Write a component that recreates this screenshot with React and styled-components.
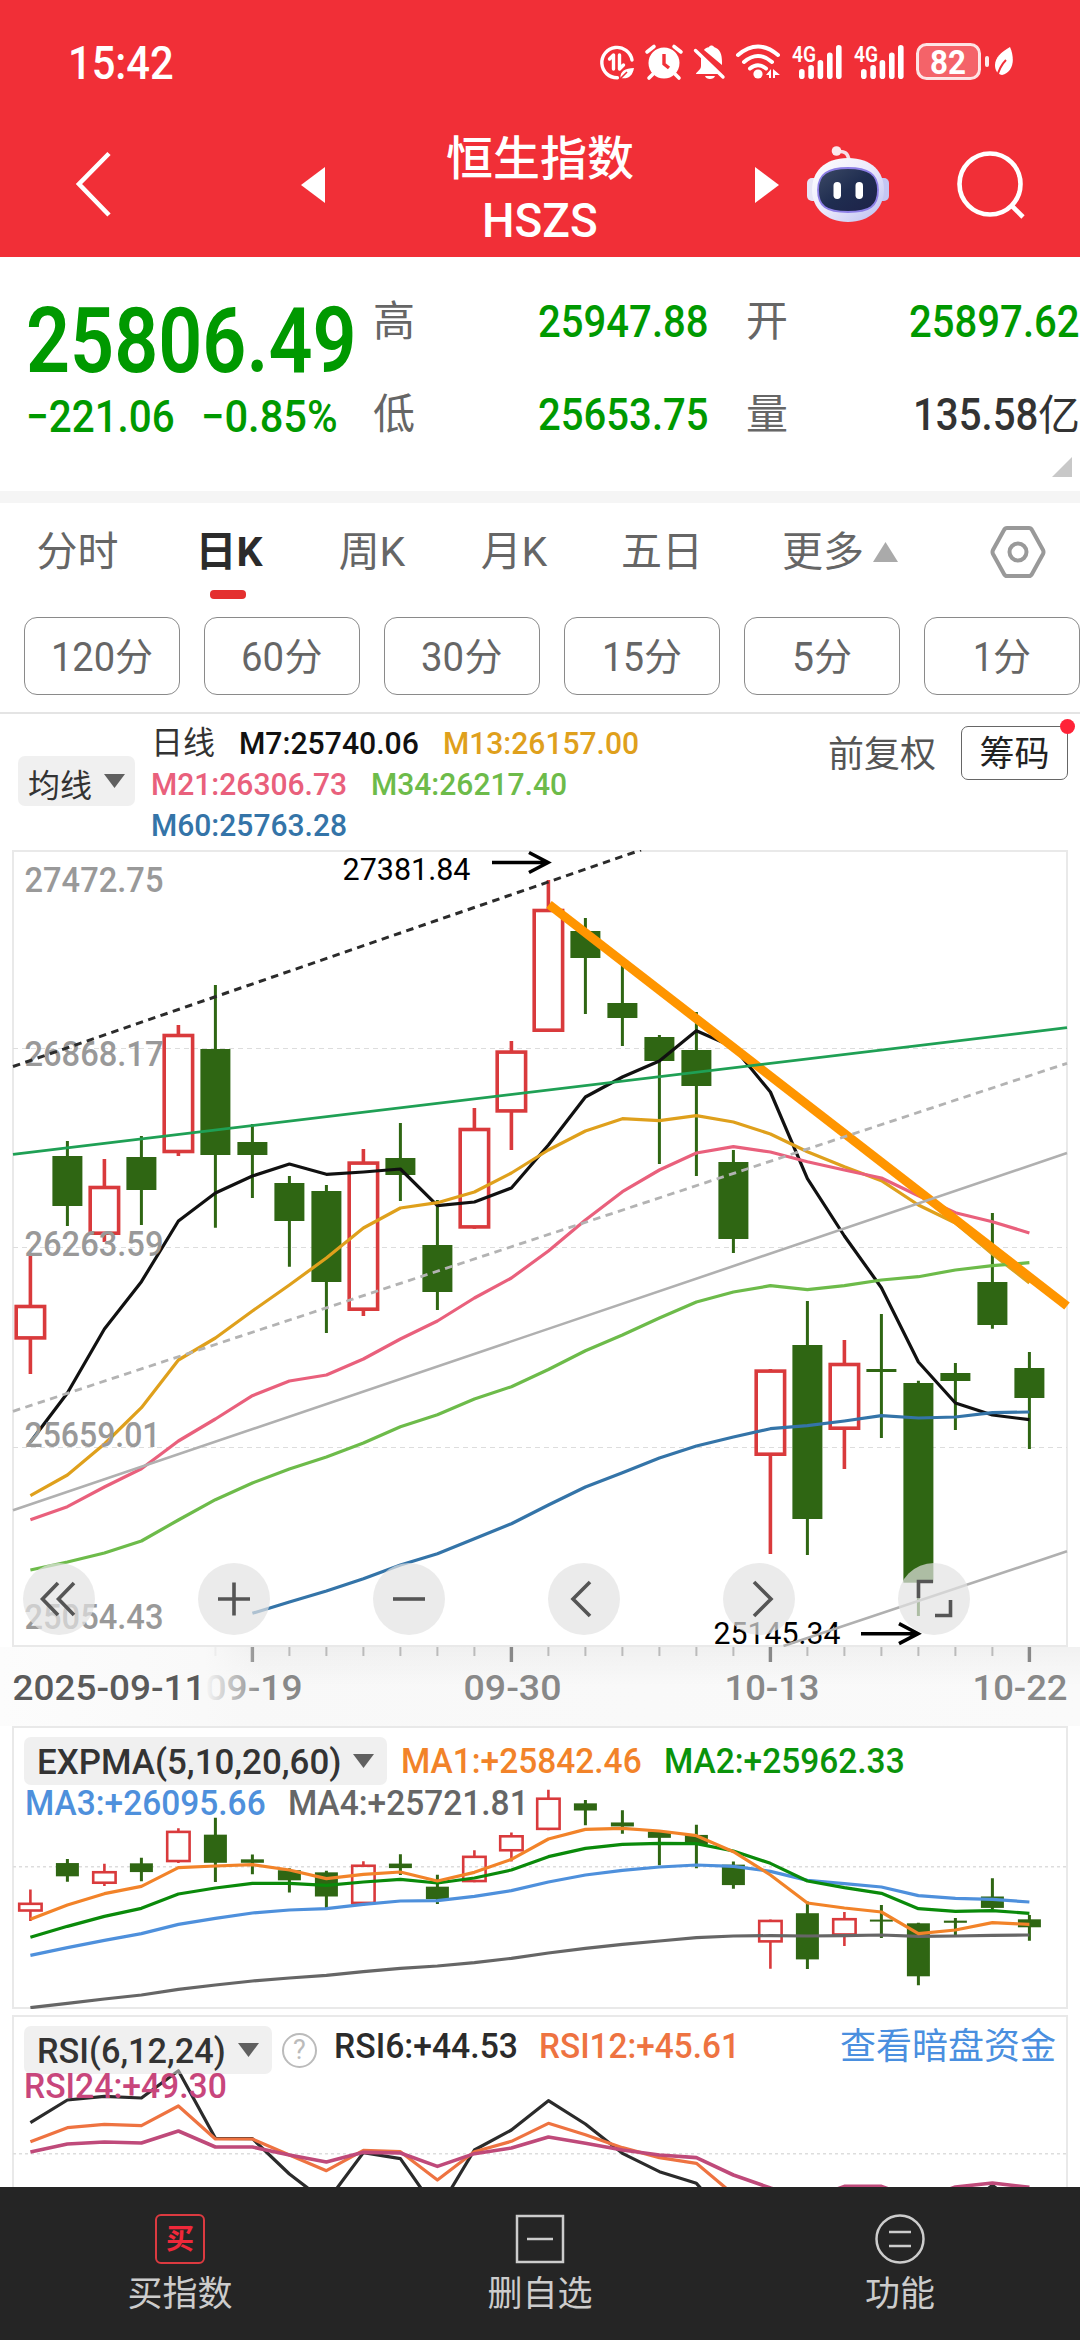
import React, { useLayoutEffect, useRef, useState } from 'react';
import styled, { createGlobalStyle } from 'styled-components';

const GlobalStyle = createGlobalStyle`
  * { box-sizing: border-box; }
  body {
    margin: 0;
    background: #fff;
    font-family: Roboto, 'Noto Sans CJK SC', sans-serif;
  }
  svg { display: block; }
`;

const RED = '#f12f37';
const UP = '#d93a3c';
const DOWN = '#2f6613';

const Screen = styled.div`
  width: 1080px;
  height: 2340px;
  overflow: hidden;
  display: flex;
  flex-direction: column;
  background: #fff;
`;

/* ---------- text squeezed to a given width, like a DIN face ---------- */

const FitBox = styled.span`
  display: inline-block;
  flex: none;
  width: ${p => p.$width}px;
  white-space: nowrap;
`;

const FitInner = styled.span`
  display: inline-block;
  transform-origin: 0 50%;
`;

const Fit = ({ width, children }) => {
  const ref = useRef(null);
  const [scale, setScale] = useState(1);
  useLayoutEffect(() => {
    if (ref.current.offsetWidth) setScale(width / ref.current.offsetWidth);
  }, [width]);
  return (
    <FitBox $width={width}>
      <FitInner ref={ref} style={{ transform: `scaleX(${scale})` }}>{children}</FitInner>
    </FitBox>
  );
};

/* ---------- status bar ---------- */

const StatusBar = styled.div`
  flex: none;
  height: 124px;
  display: flex;
  align-items: center;
  justify-content: space-between;
  padding: 0 66px 0 68px;
  background: ${RED};
  color: #fff;
`;

const Clock = styled.div`
  padding-top: 1px;
  font-size: 46px;
  font-weight: 500;
  line-height: 60px;
`;

const StatusIcons = () => (
  <svg width="416" height="40" viewBox="598 41 416 40" fill="#fff">
    <g fill="none" stroke="#fff" strokeWidth="3.4" strokeLinecap="round">
      <path d="M632 59a15.2 15.2 0 1 0-14.6 17.8" />
      <path d="M609.500 58l4-4V68M619.500 54V68l4-4" strokeLinejoin="round" />
    </g>
    <path d="M634 67c-9 .5-14 3-13.500 10 7 1.500 12-1.500 13.500-10z" />
    <path d="M620 78l7-7" stroke={RED} strokeWidth="1.600" />
    <circle cx="664" cy="62" r="15.500" />
    <path d="M647 51l7-5.500M681 51l-7-5.500M653 73l-4 4M675 73l4 4" stroke="#fff" strokeWidth="3.600" strokeLinecap="round" />
    <path d="M664 53v10l5 4" fill="none" stroke={RED} strokeWidth="3.400" />
    <path d="M701 54l20 19h-25c0-2 5-4 5-8zM704 49c2-3 4-2 5-3 1-2 4-2 5 0 6 2 8 7 8 15v3zM705 75h10c-1 4-9 4-10 0z" />
    <path d="M695.500 49.500L723 76" stroke="#fff" strokeWidth="3.400" strokeLinecap="round" />
    <g fill="none" stroke="#fff" strokeWidth="4" strokeLinecap="round">
      <path d="M738 54q20-17 40 0M744 61q14-12 28 0M750 67.500q8-6.500 16 0" />
    </g>
    <circle cx="758" cy="73" r="4.600" />
    <path d="M766 74l5-6v9h-2v-3zM773 68l7 6h-5v3h-2z" />
    {[799, 861].map(x => (
      <g key={x}>
        <text x={x - 7} y="61" fontSize="22" fontWeight="600" textLength="24" lengthAdjust="spacingAndGlyphs">4G</text>
        {[[0, 68], [9.3, 64], [18.6, 59], [28, 51.5], [37, 44]].map(([dx, top]) => (
          <rect key={dx} x={x + dx} y={top} width="5.600" height={78 - top} rx="2.800" />
        ))}
      </g>
    ))}
    <rect x="917.500" y="43.500" width="62" height="34" rx="9" fill="#fff" fillOpacity=".25" stroke="#fff" strokeWidth="3" strokeOpacity=".85" />
    <text x="930" y="72.500" fontSize="33" fontWeight="700" textLength="36" lengthAdjust="spacingAndGlyphs">82</text>
    <rect x="985" y="55" width="4" height="11" rx="2" fillOpacity=".9" />
    <path d="M1010 46c-9 5-15 11-15 18 0 5 2 9 7 10 10-2 14-14 8-28z" />
    <path d="M997 76c2-8 5-13 9-17" fill="none" stroke={RED} strokeWidth="2" />
  </svg>
);

/* ---------- title bar ---------- */

const TitleBar = styled.div`
  flex: none;
  height: 133px;
  display: flex;
  align-items: center;
  padding: 0 0 12px 74px;
  background: ${RED};
`;

const Title = styled.div`
  width: 430px;
  margin-top: 11px;
  text-align: center;
  color: #fff;
  font-size: 47px;
  font-weight: 500;
  line-height: 62px;
`;

const Ticker = styled.div`
  font-size: 49px;
`;

const Slot = styled.div`
  flex: none;
  margin-left: ${p => p.$left}px;
`;

const Robot = () => (
  <svg width="82" height="78" viewBox="0 0 82 78">
    <defs>
      <linearGradient id="shell" x1="0" y1="0" x2="1" y2="1">
        <stop offset="0" stopColor="#fff" />
        <stop offset=".5" stopColor="#ebe9fb" />
        <stop offset="1" stopColor="#b9bdf0" />
      </linearGradient>
      <linearGradient id="visor" x1="0" y1="0" x2="1" y2="1">
        <stop offset="0" stopColor="#3d4a66" />
        <stop offset=".5" stopColor="#1f2d50" />
        <stop offset="1" stopColor="#1d2148" />
      </linearGradient>
    </defs>
    <path d="M29 6q12-3 13 9" fill="none" stroke="#f6dfe8" strokeWidth="3.500" />
    <circle cx="29.500" cy="5" r="4.800" fill="#fbe9ee" />
    <rect x="0" y="32" width="12" height="23" rx="5" fill="#e6e4f6" />
    <rect x="70" y="32" width="12" height="23" rx="5" fill="#c4c6f3" />
    <path d="M41 12c24 0 36 14 36 32S63 76 41 76 5 62 5 44s12-32 36-32z" fill="url(#shell)" />
    <path d="M41 22c20 0 30 6 30 22s-8 22-30 22-30-6-30-22 10-22 30-22z" fill="url(#visor)" stroke="#8d7fe6" strokeWidth="1.800" />
    <rect x="26.500" y="36" width="7.500" height="17" rx="3.700" fill="#fff" />
    <rect x="48.500" y="36" width="7.500" height="17" rx="3.700" fill="#fff" />
  </svg>
);

/* ---------- quote ---------- */

const Quote = styled.div`
  position: relative;
  flex: none;
  height: 246px;
  display: flex;
  padding-left: 26px;
  border-bottom: 12px solid #f5f5f5;
  color: #090;
`;

const PriceColumn = styled.div`
  width: 347px;
  padding-top: 35px;
`;

const Price = styled.div`
  height: 99px;
  font-size: 90px;
  font-weight: 600;
  line-height: 100px;
`;

const Change = styled.div`
  display: flex;
  gap: 26px;
  font-size: 45px;
  font-weight: 500;
  line-height: 52px;
`;

const Stats = styled.div`
  display: grid;
  grid-template-columns: 336px 37px 334px;
  grid-auto-rows: 93px;
  padding-top: 18px;
  line-height: 93px;
`;

const Stat = styled.div`
  display: flex;
  justify-content: space-between;
  font-size: 45px;
  font-weight: 500;
  color: ${p => p.$color};
  grid-column: ${p => p.$col};
`;

const StatName = styled.span`
  font-size: 42px;
  font-weight: 400;
  color: #666;
`;

const Unit = styled.span`
  font-size: ${p => p.$size || 42}px;
  font-weight: 400;
`;

const Corner = styled.div`
  position: absolute;
  right: 8px;
  bottom: 14px;
  width: 20px;
  height: 20px;
  background: #c8c8c8;
  clip-path: polygon(100% 0, 100% 100%, 0 100%);
`;

/* ---------- period tabs ---------- */

const Tabs = styled.div`
  flex: none;
  height: 96px;
  display: grid;
  grid-template-columns: 155px 148px 138px 146px 150px 206px 150px;
`;

const Tab = styled.div`
  position: relative;
  display: flex;
  align-items: center;
  justify-content: center;
  gap: 9px;
  padding-top: 2px;
  font-size: 41px;
  line-height: 94px;
  font-weight: ${p => (p.$active ? 700 : 400)};
  color: ${p => (p.$active ? '#2b2b2b' : '#666')};

  &::after {
    content: '';
    display: ${p => (p.$active ? 'block' : 'none')};
    position: absolute;
    left: 55px;
    bottom: 0;
    width: 36px;
    height: 9px;
    border-radius: 4px;
    background: #e4302f;
  }
`;

const Triangle = styled.i`
  flex: none;
  width: ${p => p.$size}px;
  height: ${p => p.$height}px;
  background: ${p => p.$color};
  clip-path: ${p => (p.$up ? 'polygon(50% 0, 100% 100%, 0 100%)' : 'polygon(0 0, 100% 0, 50% 100%)')};
`;

const Minutes = styled.div`
  flex: none;
  display: flex;
  gap: 24px;
  height: 115px;
  padding: 18px 0 0 24px;
  border-bottom: 2px solid #e4e4e4;
`;

const Minute = styled.div`
  flex: none;
  display: flex;
  justify-content: center;
  width: 156px;
  height: 78px;
  border: 1px solid #8a8a8a;
  border-radius: 13px;
  font-size: 41px;
  line-height: 78px;
  color: #666;
`;

/* ---------- indicator header ---------- */

const Averages = styled.div`
  flex: none;
  display: flex;
  align-items: flex-start;
  height: 136px;
  padding-left: 18px;
`;

const Picker = styled.div`
  flex: none;
  display: flex;
  align-items: center;
  justify-content: space-between;
  width: ${p => p.$width}px;
  height: ${p => p.$height}px;
  margin-top: ${p => p.$top || 0}px;
  padding: 3px ${p => p.$pad}px 0;
  border-radius: 7px;
  background: rgba(225, 225, 225, 0.5);
  font-size: ${p => p.$font}px;
  font-weight: ${p => p.$weight || 500};
  color: #333;

  ${Triangle} { margin-top: -3px; }
`;

const AverageList = styled.div`
  width: 678px;
  margin-left: 15px;
  padding-top: 9px;
`;

const AverageRow = styled.div`
  display: flex;
  gap: 24px;
  height: 41px;
  padding-left: 1px;
  font-size: 32px;
  font-weight: 500;
  line-height: 41px;
`;

const Ink = styled.span`
  color: ${p => p.$color};
  font-weight: ${p => p.$weight};
`;

const Restore = styled.div`
  width: 133px;
  padding-top: 16px;
  font-size: 36px;
  line-height: 50px;
  color: #555;
`;

const ChipsButton = styled.div`
  position: relative;
  width: 107px;
  height: 54px;
  margin-top: 12px;
  border: 1.500px solid #666;
  border-radius: 7px;
  text-align: center;
  font-size: 35px;
  line-height: 55px;
  color: #222;

  &::after {
    content: '';
    position: absolute;
    right: -8px;
    top: -8px;
    width: 15px;
    height: 15px;
    border-radius: 50%;
    background: #ff2338;
  }
`;

/* ---------- chart data, in screen pixels ---------- */

const X0 = 30.4;
const STEP = 37;
const px = i => X0 + STEP * i;

// [rising, high, body top, body bottom, low]
const CANDLES = [
  [1, 1255.7, 1304.7, 1339.7, 1374],
  [0, 1141, 1156, 1206, 1226],
  [1, 1159, 1185.7, 1235, 1242],
  [0, 1136, 1157, 1190, 1225],
  [1, 1025, 1033.7, 1153.3, 1156],
  [0, 985, 1049, 1155, 1227.7],
  [0, 1124, 1142, 1155, 1198],
  [0, 1176, 1183, 1221, 1266.7],
  [0, 1185, 1191, 1282, 1333],
  [1, 1149, 1161.3, 1311, 1316],
  [0, 1123, 1158, 1175, 1201],
  [0, 1200, 1245, 1292, 1310],
  [1, 1108, 1127.7, 1228.7, 1228.7],
  [1, 1041, 1050.3, 1112.7, 1150],
  [1, 880, 908.7, 1032, 1032],
  [0, 918, 931, 958, 1014],
  [0, 957, 1003, 1018, 1046],
  [0, 1035, 1037, 1061, 1164],
  [0, 1012, 1050, 1086, 1176],
  [0, 1150, 1162, 1239, 1253],
  [1, 1369, 1369.3, 1456, 1554],
  [0, 1301, 1345, 1519, 1555],
  [1, 1340, 1362.7, 1430, 1469],
  [0, 1314, 1369, 1372, 1438],
  [0, 1380.7, 1383, 1582.7, 1616],
  [0, 1363, 1373, 1381, 1430],
  [0, 1213, 1282, 1325, 1328.7],
  [0, 1352, 1368, 1398, 1449],
];

const M7 = [1442, 1393, 1329, 1281.7, 1221, 1193, 1176, 1164, 1174.3, 1172, 1169, 1205.7, 1202, 1188, 1145, 1097, 1077, 1061, 1030.7, 1047, 1092, 1178.7, 1236, 1287.7, 1362, 1403, 1415, 1419.7];
const M13 = [1495.7, 1475, 1444, 1407.7, 1360, 1338, 1311, 1285, 1258, 1228, 1208, 1202.7, 1192, 1173, 1150, 1131, 1118.7, 1120.7, 1115.7, 1122, 1134, 1151.7, 1166.7, 1180.7, 1205, 1223, 1254, 1283];
const M21 = [1519.7, 1506.7, 1487, 1468.7, 1441, 1419, 1395.7, 1381, 1375, 1359, 1339, 1321, 1298, 1278, 1251, 1220, 1191.7, 1170, 1153, 1146.7, 1152, 1161.7, 1170, 1178, 1195.7, 1212.7, 1221.7, 1233];
const M34 = [1570, 1562, 1553, 1541, 1520, 1499.7, 1483, 1469, 1457, 1443, 1426.7, 1414.7, 1399, 1386.7, 1369.5, 1350.7, 1335, 1318, 1302, 1292, 1285.7, 1289.7, 1285.7, 1280, 1276.7, 1270, 1265.7, 1262.7];
const M60 = [1613.3, 1602, 1591, 1578.7, 1565, 1553.7, 1538.7, 1523.7, 1505, 1487, 1472.7, 1458, 1446, 1437, 1428.7, 1425.7, 1421, 1415.7, 1418, 1417, 1412.7, 1412];

// the lower panels are stored at three units per pixel
const E1 = [598, 555, 521, 499, 443, 438, 434, 450, 476, 463, 456, 483, 457, 418, 357, 328, 325, 333, 347, 395, 465, 549, 564, 576, 641, 630, 608, 613];
const E2 = [652, 619, 589, 565, 522, 504, 490, 490, 496, 486, 478, 489, 474, 450, 410, 385, 373, 370, 371, 393, 430, 483, 503, 520, 566, 574, 572, 580];
const E3 = [706, 683, 661, 641, 613, 595, 579, 570, 566, 553, 543, 542, 529, 512, 486, 465, 451, 441, 435, 439, 454, 481, 491, 501, 527, 535, 538, 546];
const E4 = [863, 850, 837, 825, 808, 795, 783, 774, 766, 755, 745, 738, 728, 715, 699, 685, 673, 663, 653, 648, 647, 648, 647, 645, 649, 648, 646, 645];

const R6 = [368, 300, 289, 294, 212, 415, 416, 522, 607, 458, 476, 635, 450, 390, 302, 372, 460, 515, 550, 675, 760, 760, 700, 720, 780, 640, 556, 640];
const R12 = [425, 383, 373, 377, 318, 417, 417, 465, 512, 451, 455, 540, 455, 424, 370, 404, 443, 473, 490, 583, 650, 680, 620, 620, 700, 640, 590, 620];
const R24 = [456, 432, 426, 429, 393, 441, 441, 465, 486, 457, 459, 499, 461, 444, 411, 430, 450, 465, 473, 525, 564, 600, 559, 559, 600, 561, 549, 562];

const Curve = ({ values, color, from = 0, base = 0, unit = 1, width = 3.2 }) => (
  <polyline
    points={values.map((v, i) => `${px(i + from)},${base + v / unit}`).join(' ')}
    fill="none"
    stroke={color}
    strokeWidth={width}
    strokeLinejoin="round"
  />
);

const Candles = ({ scale = y => y, body, line }) => CANDLES.map(([rising, ...ys], i) => {
  const [high, top, bottom, low] = ys.map(scale);
  const x = px(i);
  const color = rising ? UP : DOWN;
  return (
    <g key={i} stroke={color} strokeWidth={rising ? line : 3}>
      <path d={`M${x} ${high}V${top + 1}M${x} ${bottom - 1}V${low}`} />
      {rising ? (
        <rect x={x - (body + 2 - line) / 2} y={top + line / 2} width={body + 2 - line} height={bottom - top - line} fill="none" />
      ) : (
        <rect x={x - body / 2} y={top} width={body} height={Math.max(bottom - top, 2)} fill={color} stroke="none" />
      )}
    </g>
  );
});

const Label = ({ x, y, width, size = 35, color = '#999', weight = 500, children }) => (
  <text x={x - 1.5} y={y} fontSize={size} fontWeight={weight} fill={color} textLength={width + 3} lengthAdjust="spacingAndGlyphs">
    {children}
  </text>
);

const Arrow = ({ x1, x2, y }) => (
  <path d={`M${x1} ${y}H${x2 - 2}M${x2 - 20} ${y - 10}L${x2 - 1} ${y}L${x2 - 20} ${y + 10}`} fill="none" stroke="#000" strokeWidth="3.6" />
);

/* everything in a panel shares one grid cell */
const Panel = styled.div`
  flex: none;
  display: grid;
  height: ${p => p.$height}px;
  margin-bottom: ${p => p.$gap || 0}px;
  overflow: hidden;

  > * { grid-area: 1 / 1; }
`;

const PriceChart = () => (
  <svg width="1080" height="797" viewBox="0 850 1080 797">
    <rect x="13" y="851" width="1054" height="795" fill="none" stroke="#e9e9e9" strokeWidth="2" />
    <path d="M13 1048.500H1067M13 1247.500H1067M13 1447.500H1067" stroke="#ddd" strokeWidth="1" strokeDasharray="5 4" />
    <Candles body={30} line={3.6} />
    <Label x={344} y={880} width={125} size={31} weight={400} color="#000">27381.84</Label>
    <Arrow x1={492} x2={549} y={862.5} />
    <Label x={715} y={1644} width={124} size={31} weight={400} color="#000">25145.34</Label>
    <Arrow x1={861} x2={919} y={1633.7} />
    <Curve values={M7} color="#111" />
    <Curve values={M13} color="#dfa01c" />
    <Curve values={M21} color="#e9607c" />
    <Curve values={M34} color="#6dbb4a" />
    <Curve values={M60} from={6} color="#3474a8" />
    <Label x={26} y={892} width={136}>27472.75</Label>
    <Label x={26} y={1065.7} width={136}>26868.17</Label>
    <Label x={26} y={1256} width={136}>26263.59</Label>
    <Label x={26} y={1446.7} width={133}>25659.01</Label>
    <Label x={26} y={1628.7} width={136}>25054.43</Label>
    <path d="M549 904.500L1067 1306" stroke="#ff9500" strokeWidth="9" />
    <path d="M13 1154.300L1067 1027.700" stroke="#1fa055" strokeWidth="2.800" />
    <path d="M13 1066.500L641 850" stroke="#2b2b2b" strokeWidth="3" strokeDasharray="7.500 5.500" />
    <path d="M13 1411.300L1067 1063.300" stroke="#b3b3b3" strokeWidth="2.800" strokeDasharray="7.500 5.500" />
    <path d="M13 1510.300L1067 1153M783.500 1646L1067 1551.300" stroke="#b0b0b0" strokeWidth="2.600" />
  </svg>
);

const Controls = styled.div`
  align-self: end;
  display: flex;
  gap: 103px;
  padding: 0 0 12px 23px;
`;

const RoundButton = styled.div`
  flex: none;
  width: 72px;
  height: 72px;
  border-radius: 50%;
  background: rgba(226, 226, 226, 0.7);
`;

const CONTROL_PATHS = [
  'M35 20L19.500 36L35 52M51 20L35.500 36L51 52',
  'M20 36H52M36 19.500V52.500',
  'M20 36H52',
  'M42 19L25 36L42 53',
  'M31 19L48 36L31 53',
  'M35 18.500H20.500V35M52.500 37V52.500H37',
];

const Axis = () => (
  <svg width="1080" height="79" viewBox="0 1647 1080 79">
    <defs>
      <linearGradient id="bar" x1="0" x2="1">
        <stop offset="0" stopColor="#fff" />
        <stop offset=".2" stopColor="#f8f8f8" />
        <stop offset="1" stopColor="#fafafa" />
      </linearGradient>
      <linearGradient id="shade" x1="0" x2="0" y1="0" y2="1">
        <stop offset="0" stopColor="#000" stopOpacity=".035" />
        <stop offset=".5" stopColor="#000" stopOpacity="0" />
      </linearGradient>
      <linearGradient id="fade" x1="0" x2="1">
        <stop offset="0" stopColor="#fcfcfc" />
        <stop offset=".78" stopColor="#f9f9f9" />
        <stop offset="1" stopColor="#f8f8f8" stopOpacity="0" />
      </linearGradient>
    </defs>
    <rect y="1647" width="1080" height="79" fill="url(#bar)" />
    <rect x="160" y="1647" width="920" height="79" fill="url(#shade)" />
    {CANDLES.slice(5).map((_, n) => {
      const i = n + 5;
      const major = i % 7 === 6;
      return <path key={i} d={`M${px(i)} 1647v${major ? 15 : 9}`} stroke={major ? '#888' : '#bbb'} strokeWidth={major ? 3.4 : 2} />;
    })}
    <Label x={207} y={1700} width={94} color="#888">09-19</Label>
    <Label x={465} y={1700} width={95} color="#888">09-30</Label>
    <Label x={726} y={1700} width={92} color="#888">10-13</Label>
    <Label x={974} y={1700} width={92} color="#888">10-22</Label>
    <rect y="1647" width="262" height="79" fill="url(#fade)" />
    <Label x={14} y={1700} width={190} color="#5a5a5a">2025-09-11</Label>
  </svg>
);

const PanelTexts = styled.div`
  padding: 11px 0 0 24px;
  font-size: 35px;
  font-weight: 500;
`;

const PanelRow = styled.div`
  display: flex;
  gap: ${p => p.$gap}px;
  line-height: ${p => p.$line}px;
  margin-top: ${p => p.$top || 0}px;
  margin-left: ${p => p.$left || 0}px;
`;

const DarkPool = styled.div`
  margin-left: auto;
  padding-right: 24px;
  font-size: 36px;
  font-weight: 400;
  color: #4a8fdf;
`;

const Help = styled.div`
  flex: none;
  width: 35px;
  height: 35px;
  margin: 7px 3px 0 -4px;
  border: 2.500px solid #bbb;
  border-radius: 50%;
  text-align: center;
  font-size: 27px;
  font-weight: 400;
  line-height: 31px;
  color: #bbb;
`;

/* ---------- bottom bar ---------- */

const BottomBar = styled.div`
  flex: none;
  height: 153px;
  display: grid;
  grid-template-columns: repeat(3, 1fr);
  background: #252525;
`;

const Action = styled.div`
  display: flex;
  flex-direction: column;
  align-items: center;
  padding-top: 27px;
  font-size: 35px;
  line-height: 62px;
  color: #ccc;
`;

const BuyIcon = styled.div`
  width: 50px;
  height: 50px;
  border: 2.500px solid #dc3a40;
  border-radius: 6px;
  text-align: center;
  font-size: 28px;
  font-weight: 700;
  line-height: 48px;
  color: #f0283a;
`;

const App = () => (
  <Screen>
    <GlobalStyle />
    <StatusBar>
      <Clock><Fit width={106}>15:42</Fit></Clock>
      <StatusIcons />
    </StatusBar>
    <TitleBar>
      <svg width="38" height="68" viewBox="0 0 38 68" fill="none" stroke="#fff" strokeWidth="4.6">
        <path d="M35 2.500L5 33L35 64" />
      </svg>
      <Slot $left={189}>
        <svg width="24" height="36" viewBox="0 0 24 36" fill="#fff"><path d="M24 0V36L0 18z" /></svg>
      </Slot>
      <Title>
        <div>恒生指数</div>
        <Ticker><Fit width={116}>HSZS</Fit></Ticker>
      </Title>
      <svg width="24" height="36" viewBox="0 0 24 36" fill="#fff"><path d="M0 0V36L24 18z" /></svg>
      <Slot $left={28}><Robot /></Slot>
      <Slot $left={66}>
        <svg width="72" height="70" viewBox="0 0 72 70" fill="none" stroke="#fff" strokeWidth="4.6">
          <circle cx="35" cy="34" r="30.500" />
          <path d="M57 56L68 67" />
        </svg>
      </Slot>
    </TitleBar>

    <Quote>
      <PriceColumn>
        <Price><Fit width={331}>25806.49</Fit></Price>
        <Change>
          <Fit width={149}>−221.06</Fit>
          <Fit width={137}>−0.85%</Fit>
        </Change>
      </PriceColumn>
      <Stats>
        <Stat $col={1}><StatName>高</StatName><Fit width={171}>25947.88</Fit></Stat>
        <Stat $col={3}><StatName>开</StatName><Fit width={171}>25897.62</Fit></Stat>
        <Stat $col={1}><StatName>低</StatName><Fit width={171}>25653.75</Fit></Stat>
        <Stat $col={3} $color="#333">
          <StatName>量</StatName>
          <span><Fit width={125}>135.58</Fit><Unit>亿</Unit></span>
        </Stat>
      </Stats>
      <Corner />
    </Quote>

    <Tabs>
      <Tab>分时</Tab>
      <Tab $active>日K</Tab>
      <Tab>周K</Tab>
      <Tab>月K</Tab>
      <Tab>五日</Tab>
      <Tab>更多<Triangle $up $size={25} $height={20} $color="#aaa" /></Tab>
      <Tab>
        <svg width="56" height="54" viewBox="0 0 56 54" fill="none" stroke="#999" strokeWidth="4">
          <path d="M17 3H39Q41 3 42 5L53 25Q54 27 53 29L42 49Q41 51 39 51H17Q15 51 14 49L3 29Q2 27 3 25L14 5Q15 3 17 3z" />
          <circle cx="28" cy="27" r="8.500" />
        </svg>
      </Tab>
    </Tabs>
    <Minutes>
      {[['120', 64], ['60', 43], ['30', 43], ['15', 42], ['5', 22], ['1', 20]].map(([n, w]) => (
        <Minute key={n}><Fit width={w}>{n}</Fit><Unit $size={38}>分</Unit></Minute>
      ))}
    </Minutes>

    <Averages>
      <Picker $width={117} $height={50} $pad={10} $font={32} $weight={400} $top={42}>
        均线<Triangle $size={21} $height={14} $color="#606060" />
      </Picker>
      <AverageList>
        <AverageRow>
          <Ink $color="#333" $weight={400}>日线</Ink>
          <Ink $color="#111"><Fit width={180}>M7:25740.06</Fit></Ink>
          <Ink $color="#dfa01c"><Fit width={196}>M13:26157.00</Fit></Ink>
        </AverageRow>
        <AverageRow>
          <Ink $color="#e9607c"><Fit width={196}>M21:26306.73</Fit></Ink>
          <Ink $color="#6dbb4a"><Fit width={196}>M34:26217.40</Fit></Ink>
        </AverageRow>
        <AverageRow>
          <Ink $color="#3474a8"><Fit width={196}>M60:25763.28</Fit></Ink>
        </AverageRow>
      </AverageList>
      <Restore>前复权</Restore>
      <ChipsButton>筹码</ChipsButton>
    </Averages>

    <Panel $height={797}>
      <PriceChart />
      <Controls>
        {CONTROL_PATHS.map(d => (
          <RoundButton key={d}>
            <svg width="72" height="72" viewBox="0 0 72 72" fill="none" stroke="#555" strokeWidth="3.6"><path d={d} /></svg>
          </RoundButton>
        ))}
      </Controls>
    </Panel>
    <Axis />

    <Panel $height={283} $gap={6}>
      <svg width="1080" height="283" viewBox="0 1726 1080 283">
        <rect x="13" y="1727" width="1054" height="281" fill="none" stroke="#e9e9e9" strokeWidth="2" />
        <path d="M13 1866.700H1067" stroke="#ddd" strokeWidth="1.500" strokeDasharray="3 3" />
        <Candles scale={y => 1923.3 + (y - 1383) * 0.2654} body={23} line={2.6} />
        <Curve values={E4} base={1720} unit={3} color="#666" />
        <Curve values={E3} base={1720} unit={3} color="#4e90dc" />
        <Curve values={E2} base={1720} unit={3} color="#0a8a0a" />
        <Curve values={E1} base={1720} unit={3} color="#f28329" />
      </svg>
      <PanelTexts>
        <PanelRow $gap={14} $line={50}>
          <Picker $width={363} $height={48} $pad={13} $font={35}>
            <Fit width={304}>EXPMA(5,10,20,60)</Fit>
            <Triangle $size={21} $height={14} $color="#606060" />
          </Picker>
          <Ink $color="#f28329"><Fit width={241}>MA1:+25842.46</Fit></Ink>
          <Slot $left={8}><Ink $color="#0a930a"><Fit width={241}>MA2:+25962.33</Fit></Ink></Slot>
        </PanelRow>
        <PanelRow $gap={22} $line={34} $left={1}>
          <Ink $color="#4e90dc"><Fit width={241}>MA3:+26095.66</Fit></Ink>
          <Ink $color="#666"><Fit width={241}>MA4:+25721.81</Fit></Ink>
        </PanelRow>
      </PanelTexts>
    </Panel>

    <Panel $height={172}>
      <svg width="1080" height="172" viewBox="0 2015 1080 172">
        <path d="M13 2190V2016H1067V2190" fill="none" stroke="#e9e9e9" strokeWidth="2" />
        <path d="M13 2153.700H1067" stroke="#ddd" strokeWidth="1.500" strokeDasharray="3 3" />
        <Curve values={R6} base={2000} unit={3} color="#2b2b2b" />
        <Curve values={R12} base={2000} unit={3} color="#ee7341" />
        <Curve values={R24} base={2000} unit={3} color="#bf4a7a" width={3.6} />
      </svg>
      <PanelTexts>
        <PanelRow $gap={14} $line={42}>
          <Picker $width={248} $height={48} $pad={13} $font={35}>
            <Fit width={189}>RSI(6,12,24)</Fit>
            <Triangle $size={21} $height={14} $color="#606060" />
          </Picker>
          <Help>?</Help>
          <Ink $color="#2b2b2b"><Fit width={184}>RSI6:+44.53</Fit></Ink>
          <Slot $left={7}><Ink $color="#ee7341"><Fit width={201}>RSI12:+45.61</Fit></Ink></Slot>
          <DarkPool>查看暗盘资金</DarkPool>
        </PanelRow>
        <PanelRow $gap={0} $line={34} $top={-4}>
          <Ink $color="#c8467c"><Fit width={203}>RSI24:+49.30</Fit></Ink>
        </PanelRow>
      </PanelTexts>
    </Panel>

    <BottomBar>
      <Action><BuyIcon>买</BuyIcon>买指数</Action>
      <Action>
        <svg width="50" height="50" viewBox="0 0 50 50" fill="none" stroke="#ccc" strokeWidth="2.5">
          <rect x="2" y="2" width="46" height="46" />
          <path d="M12 25H38" />
        </svg>
        删自选
      </Action>
      <Action>
        <svg width="50" height="50" viewBox="0 0 50 50" fill="none" stroke="#ccc" strokeWidth="2.5">
          <circle cx="25" cy="25" r="23.500" />
          <path d="M14 18H36M14 32H36" />
        </svg>
        功能
      </Action>
    </BottomBar>
  </Screen>
);

export default App;
